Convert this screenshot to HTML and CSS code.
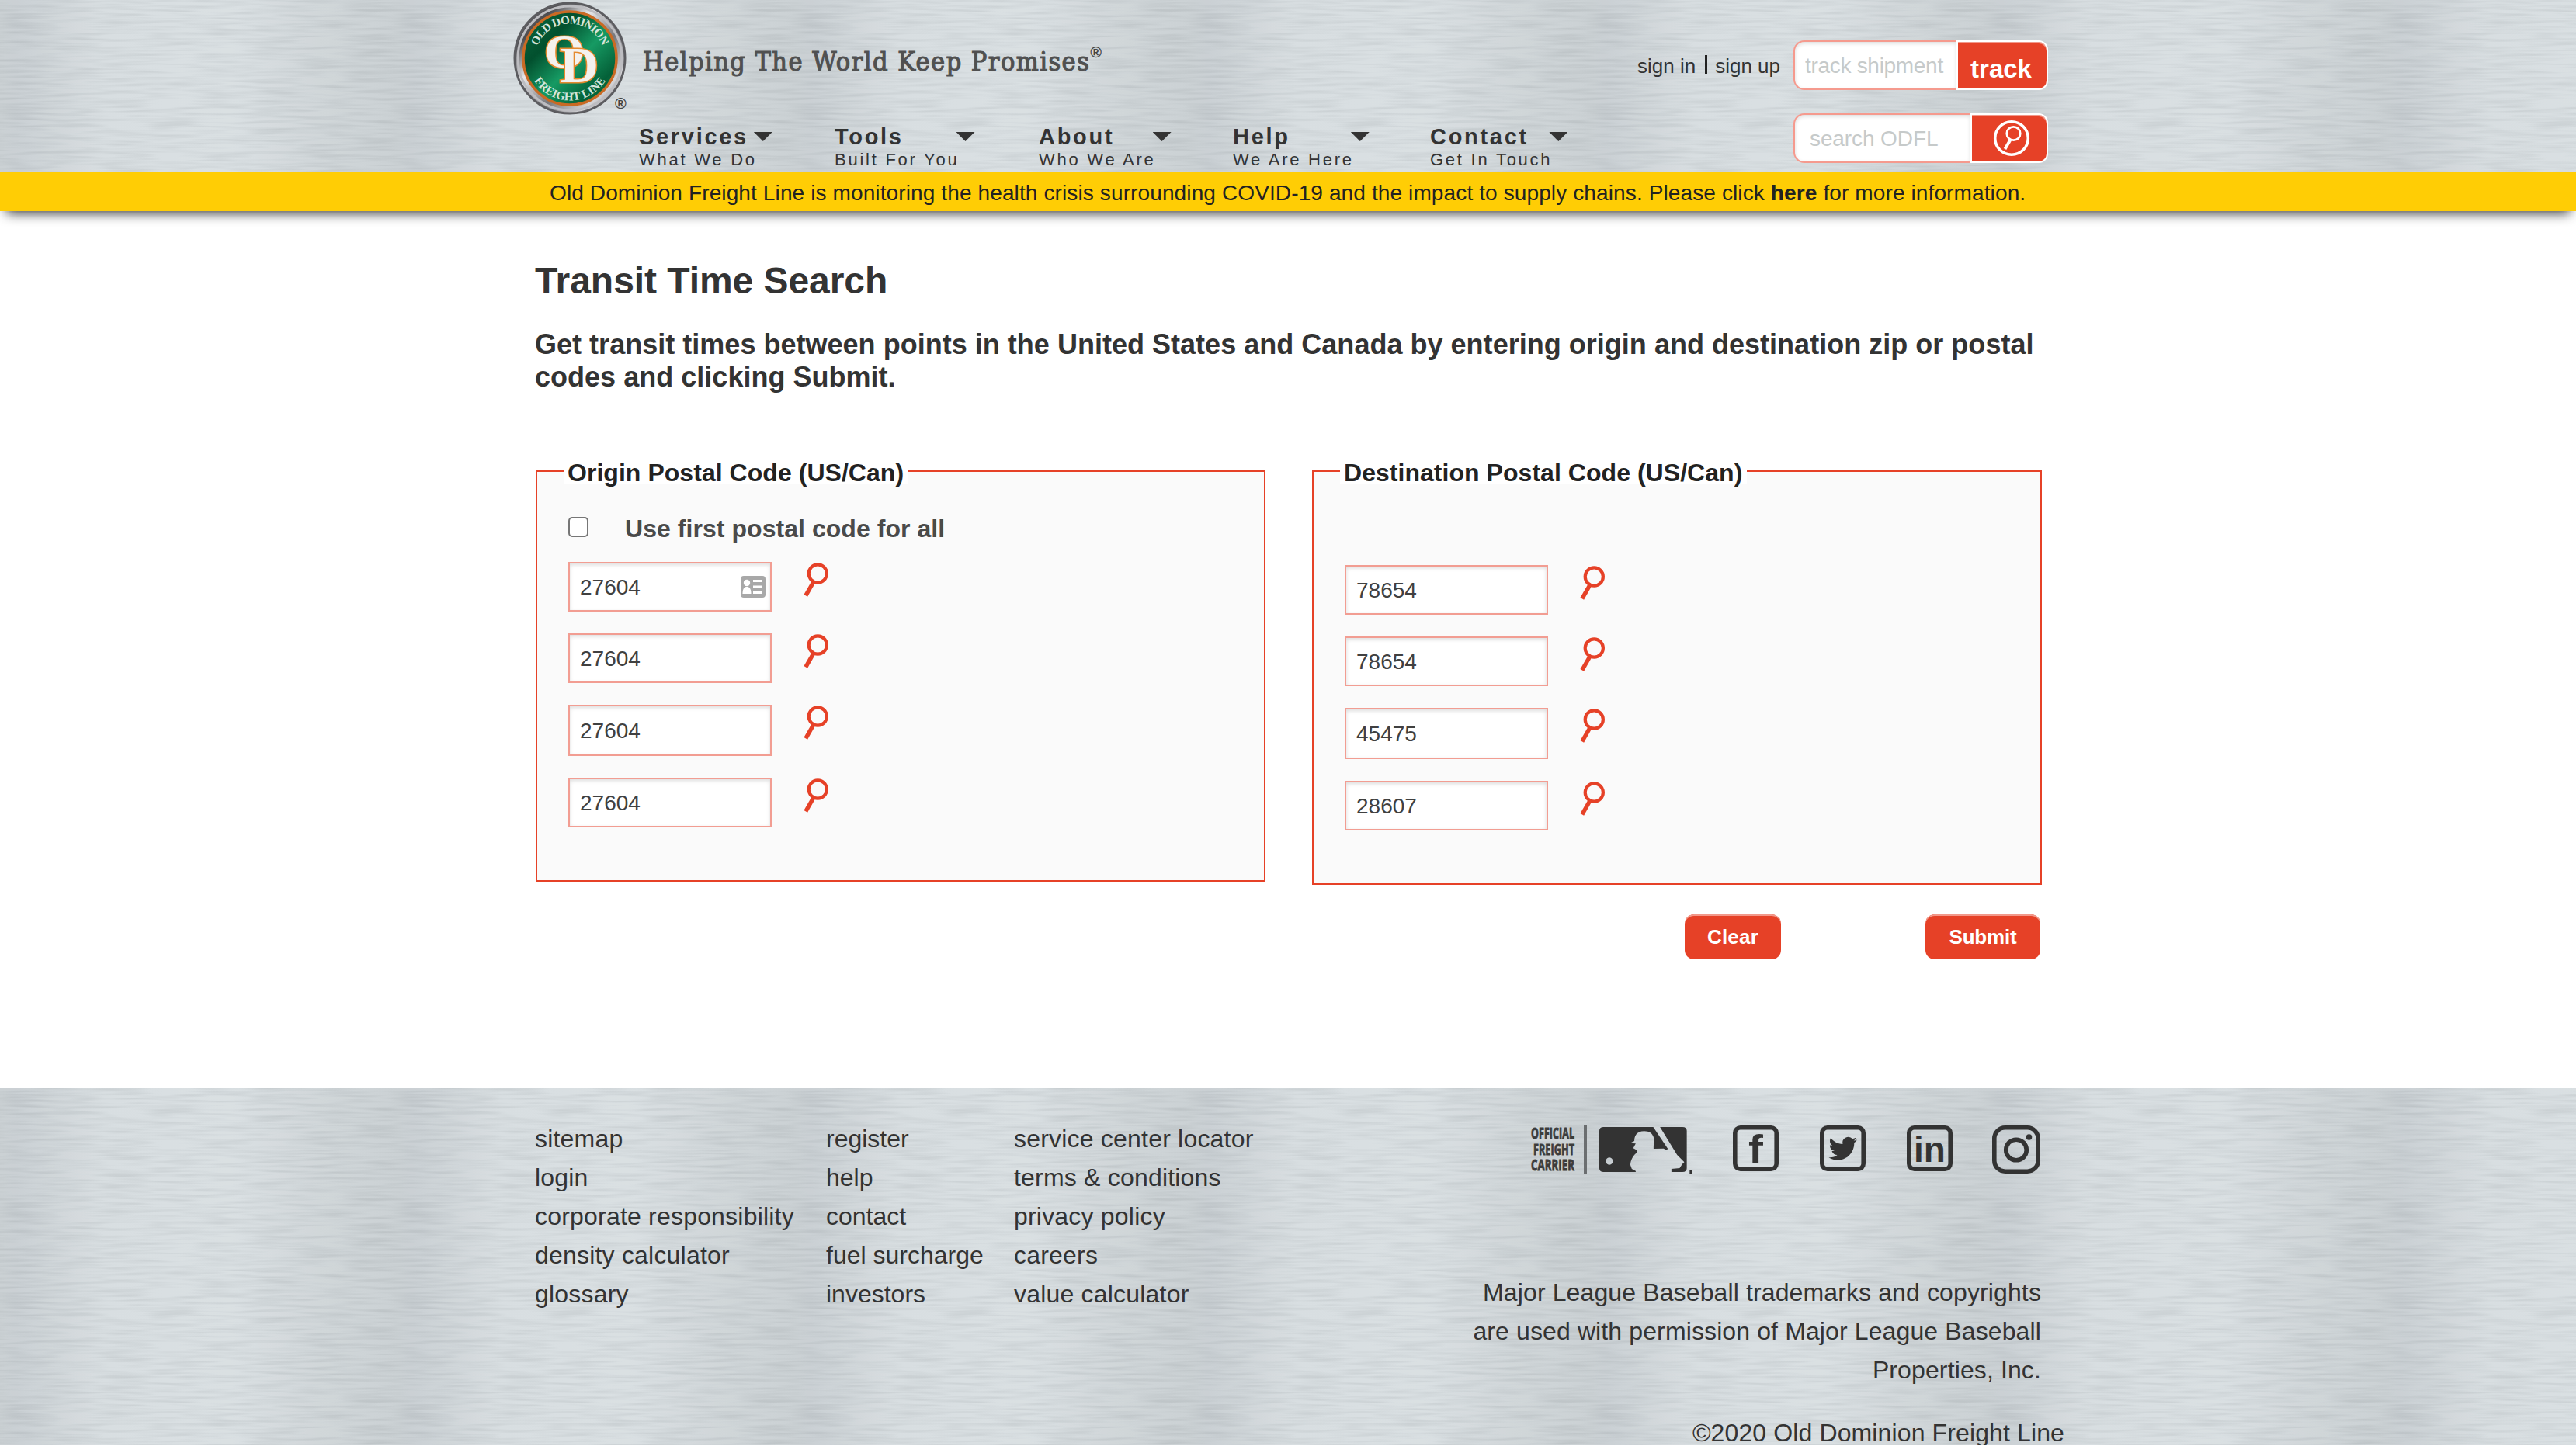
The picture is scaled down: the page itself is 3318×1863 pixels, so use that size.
FILE: index.html
```html
<!DOCTYPE html>
<html lang="en">
<head>
<meta charset="utf-8">
<title>Transit Time Search</title>
<link rel="stylesheet" href="styles.css">
</head>
<body>
<svg class="defs" aria-hidden="true">
  <symbol id="magnifier" viewBox="0 0 32 45">
    <circle cx="18.3" cy="14" r="11.6" fill="none" stroke="#e64127" stroke-width="4.2"/>
    <path d="M13 24.5L2.8 42.3" stroke="#e64127" stroke-width="5.4"/>
  </symbol>
</svg>

<header class="header metal">
  <svg class="logo" viewBox="0 0 146 150">
    <defs>
      <linearGradient id="chrome" x1="0" y1="0" x2="1" y2="1">
        <stop offset="0" stop-color="#8b8b90"/><stop offset=".2" stop-color="#4c4c50"/>
        <stop offset=".38" stop-color="#e8e8ea"/><stop offset=".6" stop-color="#77777b"/>
        <stop offset=".8" stop-color="#d5d5d8"/><stop offset="1" stop-color="#59595d"/>
      </linearGradient>
      <linearGradient id="green" x1="0" y1="0" x2="1" y2="1">
        <stop offset="0" stop-color="#0b6b40"/><stop offset=".3" stop-color="#02502e"/>
        <stop offset=".55" stop-color="#169a63"/><stop offset=".8" stop-color="#046038"/><stop offset="1" stop-color="#0d8a55"/>
      </linearGradient>
      <path id="arcTop" d="M28.500 75A44.500 44.500 0 0 1 117.500 75"/>
      <path id="arcBottom" d="M18.500 75A54.500 54.500 0 0 0 127.500 75"/>
    </defs>
    <circle cx="73" cy="75" r="71" fill="url(#chrome)" stroke="#5c5c60" stroke-width="3"/>
    <circle cx="73" cy="75" r="67" fill="none" stroke="#bdbdc1" stroke-width="3"/>
    <circle cx="73" cy="75" r="60" fill="url(#green)" stroke="#c96a24" stroke-width="3.500"/>
    <g class="logo-ring">
      <text><textPath href="#arcTop" startOffset="50%" text-anchor="middle" textLength="108">OLD DOMINION</textPath></text>
      <text><textPath href="#arcBottom" startOffset="50%" text-anchor="middle" textLength="110">FREIGHT LINE</textPath></text>
    </g>
    <g class="logo-mono">
      <text x="40" y="87" font-size="62" textLength="52" lengthAdjust="spacingAndGlyphs">O</text>
      <text x="60" y="106" font-size="66" textLength="50" lengthAdjust="spacingAndGlyphs">D</text>
    </g>
  </svg>
  <div class="brand">
    <div class="tagline"><span class="reg-logo">®</span>Helping The World Keep Promises<span class="reg">®</span></div>
    <nav class="nav">
      <a class="nav-item"><b>Services</b><i></i><span>What We Do</span></a>
      <a class="nav-item"><b>Tools</b><i></i><span>Built For You</span></a>
      <a class="nav-item"><b>About</b><i></i><span>Who We Are</span></a>
      <a class="nav-item"><b>Help</b><i></i><span>We Are Here</span></a>
      <a class="nav-item"><b>Contact</b><i></i><span>Get In Touch</span></a>
    </nav>
  </div>
  <div class="tools">
    <div class="tool-row">
      <div class="account"><a>sign in</a><i></i><a>sign up</a></div>
      <input class="tool-input tool-track" placeholder="track shipment">
      <button class="tool-btn btn-track">track</button>
    </div>
    <div class="tool-row">
      <input class="tool-input tool-search" placeholder="search ODFL">
      <button class="tool-btn btn-search" aria-label="search">
        <svg width="48" height="48" viewBox="0 0 48 48" fill="none" stroke="#fff">
          <circle cx="24" cy="24" r="21.300" stroke-width="3.600"/>
          <circle cx="26.500" cy="18" r="8.700" stroke-width="2.800"/>
          <path d="M22.500 26L15.500 38" stroke-width="4"/>
        </svg>
      </button>
    </div>
  </div>
</header>

<div class="alert">Old Dominion Freight Line is monitoring the health crisis surrounding COVID-19 and the impact to supply chains. Please click <b>here</b> for more information.</div>

<main class="main">
  <h1>Transit Time Search</h1>
  <p class="intro">Get transit times between points in the United States and Canada by entering origin and destination zip or postal<br>codes and clicking Submit.</p>
  <form>
    <div class="panels">
      <fieldset class="panel panel-origin">
        <legend>Origin Postal Code (US/Can)</legend>
        <label class="same"><input type="checkbox">Use first postal code for all</label>
        <div class="rows">
          <div class="row"><div class="field"><input value="27604">
            <svg class="card" width="32" height="28" viewBox="0 0 32 28"><rect width="32" height="28" rx="4" fill="#a8a8a8"/><circle cx="8" cy="9" r="4.200" fill="#fff"/><path d="M2.500 23c0-6 2-9 5.500-9s5.500 3 5.500 9z" fill="#fff"/><path d="M16 6.500h12M16 14h12M16 21.500h12" stroke="#fff" stroke-width="3"/></svg></div><svg class="mag"><use href="#magnifier"/></svg></div>
          <div class="row"><div class="field"><input value="27604"></div><svg class="mag"><use href="#magnifier"/></svg></div>
          <div class="row row-tall"><div class="field"><input value="27604"></div><svg class="mag"><use href="#magnifier"/></svg></div>
          <div class="row"><div class="field"><input value="27604"></div><svg class="mag"><use href="#magnifier"/></svg></div>
        </div>
      </fieldset>
      <fieldset class="panel panel-dest">
        <legend>Destination Postal Code (US/Can)</legend>
        <div class="rows">
          <div class="row"><div class="field"><input value="78654"></div><svg class="mag"><use href="#magnifier"/></svg></div>
          <div class="row"><div class="field"><input value="78654"></div><svg class="mag"><use href="#magnifier"/></svg></div>
          <div class="row row-tall"><div class="field"><input value="45475"></div><svg class="mag"><use href="#magnifier"/></svg></div>
          <div class="row"><div class="field"><input value="28607"></div><svg class="mag"><use href="#magnifier"/></svg></div>
        </div>
      </fieldset>
    </div>
    <div class="actions">
      <button class="btn btn-clear" type="button">Clear</button>
      <button class="btn btn-submit" type="button">Submit</button>
    </div>
  </form>
</main>

<footer class="footer metal">
  <div class="links">
    <ul><li>sitemap</li><li>login</li><li>corporate responsibility</li><li>density calculator</li><li>glossary</li></ul>
    <ul><li>register</li><li>help</li><li>contact</li><li>fuel surcharge</li><li>investors</li></ul>
    <ul><li>service center locator</li><li>terms &amp; conditions</li><li>privacy policy</li><li>careers</li><li>value calculator</li></ul>
  </div>
  <div class="legal">
    <div class="icons">
      <svg class="carrier" width="72" height="62" viewBox="0 0 72 62">
        <g class="carrier-text"><text x="0" y="17" textLength="56" lengthAdjust="spacingAndGlyphs">OFFICIAL</text><text x="3" y="37.500" textLength="53" lengthAdjust="spacingAndGlyphs">FREIGHT</text><text x="0" y="58" textLength="56" lengthAdjust="spacingAndGlyphs">CARRIER</text></g>
        <path d="M70 0v62" stroke="#6b6e70" stroke-width="4"/>
      </svg>
      <svg class="mlb" width="120" height="62" viewBox="240 90 261 186" preserveAspectRatio="none" fill="#333">
        <path fill-rule="evenodd" d="M252 96H391L432 180L428 185L420 179L392 180V168C396 150 395 112 366 112C343 112 338 134 338 150L326 158L342 160L335 178L346 186L345 195C335 205 327 225 327 243L331 258L342 266V270H252Q240 270 240 256V110Q240 96 252 96ZM268 214a10 14 0 1 0 .1 0z"/>
        <path d="M410 96H473Q485 96 485 110V256Q485 270 473 270H442V258L465 255L472 240L478 232L458 204Z"/>
        <path d="M493 264h8v12h-8z"/>
      </svg>
      <svg class="soc" width="59" height="59" viewBox="0 0 59 59"><rect class="frame" x="2.800" y="2.800" width="53.400" height="53.400" rx="7"/><text x="20" y="48.500" font-size="51" textLength="19" lengthAdjust="spacingAndGlyphs">f</text></svg>
      <svg class="soc" width="59" height="59" viewBox="0 0 59 59"><rect class="frame" x="2.800" y="2.800" width="53.400" height="53.400" rx="7"/><path transform="translate(11.500 11.500) scale(1.520)" d="M23.953 4.570a10 10 0 01-2.825.775 4.958 4.958 0 002.163-2.723c-.951.555-2.005.959-3.127 1.184a4.920 4.920 0 00-8.384 4.482C7.690 8.095 4.067 6.130 1.640 3.162a4.822 4.822 0 00-.666 2.475c0 1.710.870 3.213 2.188 4.096a4.904 4.904 0 01-2.228-.616v.060a4.923 4.923 0 003.946 4.827 4.996 4.996 0 01-2.212.085 4.936 4.936 0 004.604 3.417 9.867 9.867 0 01-6.102 2.105c-.390 0-.779-.023-1.170-.067a13.995 13.995 0 007.557 2.209c9.053 0 13.998-7.496 13.998-13.985 0-.210 0-.420-.015-.630A9.935 9.935 0 0024 4.590z"/></svg>
      <svg class="soc" width="59" height="59" viewBox="0 0 59 59"><rect class="frame" x="2.800" y="2.800" width="53.400" height="53.400" rx="7"/><text x="9" y="47" font-size="46" textLength="41" lengthAdjust="spacingAndGlyphs">in</text></svg>
      <svg class="soc" width="62" height="62" viewBox="0 0 62 62"><rect class="frame" x="2.800" y="2.800" width="56.400" height="56.400" rx="14"/><circle class="frame" cx="31" cy="31.500" r="13.300"/><circle cx="47.500" cy="15" r="3.800"/></svg>
    </div>
    <p>Major League Baseball trademarks and copyrights<br>are used with permission of Major League Baseball<br>Properties, Inc.</p>
    <p class="copy">©2020 Old Dominion Freight Line</p>
  </div>
</footer>
</body>
</html>
```
FILE: styles.css
```css
* { box-sizing: border-box; }
html { height: 100%; overflow: hidden; }
body { margin: 0; background: #fff; color: #333; font-family: "Liberation Sans", Arial, Helvetica, sans-serif; }
.defs { display: none; }
input, button { font-family: inherit; margin: 0; }

/* brushed steel: soft vertical bands under a fine horizontal grain */
.metal {
  background-color: #d0d6d9;
  background-image: url("data:image/svg+xml,%3Csvg xmlns='http://www.w3.org/2000/svg' width='512' height='260'%3E%3ClinearGradient id='g'%3E%3Cstop offset='0' stop-color='%23c7cdd0'/%3E%3Cstop offset='.04' stop-color='%23c6ccd0'/%3E%3Cstop offset='.26' stop-color='%23d5dbde'/%3E%3Cstop offset='.58' stop-color='%23d7dde0'/%3E%3Cstop offset='.8' stop-color='%23cdd3d6'/%3E%3Cstop offset='1' stop-color='%23c7cdd0'/%3E%3C/linearGradient%3E%3Cfilter id='a' x='0' y='0' width='100%25' height='100%25' color-interpolation-filters='sRGB'%3E%3CfeTurbulence type='fractalNoise' baseFrequency='.016 .26' numOctaves='2' seed='4' stitchTiles='stitch'/%3E%3CfeColorMatrix values='1.6 0 0 0 .02 1.6 0 0 0 .05 1.6 0 0 0 .06 0 0 0 0 .08'/%3E%3C/filter%3E%3Crect width='512' height='260' fill='url(%23g)'/%3E%3Crect width='512' height='260' filter='url(%23a)'/%3E%3C/svg%3E");
}
.header.metal { background-position: 0 130px; }

/* header */
.header { display: flex; height: 222px; padding-left: 661px; }
.logo { width: 146px; height: 150px; flex: none; }
.logo-ring { font: bold 15px "Liberation Serif", serif; fill: #d5e5dc; }
.logo-mono { font-family: "Liberation Serif", serif; font-weight: bold; fill: #f4f1ee; stroke: #e58a2f; stroke-width: 3px; paint-order: stroke; }
.brand { width: 1303px; padding: 52px 0 0 16px; }
.tagline { position: relative; height: 108px; padding-left: 5px; font-family: "DejaVu Serif Condensed", "DejaVu Serif", serif; font-stretch: condensed; font-size: 34px; line-height: 54px; letter-spacing: 1.45px; color: #505050; -webkit-text-stroke: 1.1px #505050; white-space: nowrap; }
.reg, .reg-logo { font-family: "Liberation Sans", sans-serif; font-size: 20px; font-weight: bold; line-height: 20px; letter-spacing: 0; color: #444; -webkit-text-stroke: 0; }
.reg { vertical-align: 17px; }
.reg-logo { position: absolute; left: -31px; top: 71px; }
.nav { display: grid; grid-template-columns: 252px 263px 250px 254px 200px; }
.nav-item { display: grid; grid-template-columns: max-content 24px; justify-content: start; }
.nav-item b { grid-column: 1; width: 0; font-size: 29px; line-height: 33px; letter-spacing: 2.7px; white-space: nowrap; }
.nav-item span { grid-column: 1; font-size: 22px; line-height: 26px; letter-spacing: 2.75px; white-space: nowrap; }
.nav-item i { width: 24px; height: 12px; margin: 10px 0 0 -4px; background: #333; clip-path: polygon(0 0, 100% 0, 50% 100%); }
.tools { display: flex; flex-direction: column; align-items: flex-end; gap: 30px; padding-top: 52px; width: 528px; }
.tool-row { display: flex; align-items: flex-start; }
.account { display: flex; width: 201px; padding-top: 15px; font-size: 26px; line-height: 36px; }
.account i { width: 3px; height: 24px; margin: 4px 10px 0 12px; background: #222; }
.tool-input { height: 64px; padding: 1px 0 0 13px; border: 2px solid #f59a8e; border-right: 0; border-radius: 14px 0 0 14px; background: #fff; font-size: 28px; letter-spacing: -.1px; box-shadow: inset 0 2px 5px rgba(0,0,0,.14); }
.tool-input::placeholder { color: #c6caca; opacity: 1; }
.tool-track { width: 210px; letter-spacing: -.3px; }
.tool-search { width: 228px; padding-left: 19px; }
.tool-btn { display: flex; justify-content: center; align-items: center; height: 64px; padding: 0; border: 2px solid #fff; border-radius: 0 12px 12px 0; background: #e64127; color: #fff; box-shadow: inset 0 2px 0 #f2988a; }
.btn-track { width: 118px; font-size: 33px; font-weight: bold; padding: 10px 3px 0 0; }
.btn-search { width: 100px; padding: 0 0 0 6px; }

.alert { position: relative; height: 50px; padding-left: 708px; background: #ffcd05; color: #222; font-size: 28px; line-height: 53px; letter-spacing: .12px; white-space: nowrap; box-shadow: 0 10px 16px -8px rgba(0,0,0,.85); }

/* main */
.main { height: 1130px; padding: 62px 0 0 689px; width: 2630px; }
h1 { margin: 0; font-size: 48px; line-height: 56px; letter-spacing: -.06px; }
.intro { margin: 33px 0 0; font-size: 36px; font-weight: bold; line-height: 42px; letter-spacing: .02px; white-space: nowrap; }
.panels { display: grid; grid-template-columns: 940px 940px; column-gap: 60px; align-items: start; margin: 83px 0 0 1px; }
.panel { margin: 0; padding: 0 34px; border: 2px solid #e64127; background: #fafafa; }
.panel-origin { height: 546px; }
.panel-dest { height: 550px; }
legend { padding: 4px 6px 0 5px; height: 34px; line-height: 30px; font-size: 32px; font-weight: bold; letter-spacing: .04px; color: #222; background: #fff; white-space: nowrap; }
.same { display: flex; align-items: flex-start; gap: 47px; margin: 42px 0 0 6px; height: 58px; font-size: 32px; font-weight: bold; line-height: 30px; letter-spacing: .05px; color: #4a4a4a; }
.same input { appearance: none; width: 26px; height: 26px; border: 2px solid #767676; border-radius: 5px; background: #fff; }
.rows { display: flex; flex-direction: column; gap: 28px; margin-left: 6px; }
.panel-dest .rows { margin-top: 104px; }
.row { display: flex; gap: 41px; height: 64px; }
.row-tall { height: 66px; }
.field { position: relative; width: 262px; height: 100%; }
.field input { width: 100%; height: 100%; padding: 1px 13px 0; border: 2px solid #f29d92; background: #fff; color: #404040; font-size: 28px; box-shadow: inset 0 2px 5px rgba(0,0,0,.14); }
.card { position: absolute; right: 8px; top: 18px; }
.mag { width: 32px; height: 45px; margin-top: 1px; }
.actions { display: flex; justify-content: flex-end; gap: 186px; padding: 38px 2px 0 0; }
.btn { height: 58px; padding: 1px 0 0; border: 0; border-radius: 12px; background: #e64127; color: #fff; font-size: 26px; font-weight: bold; box-shadow: inset 0 2px 0 #f2988a; }
.btn-clear { width: 124px; letter-spacing: .2px; }
.btn-submit { width: 148px; letter-spacing: -.2px; }

/* footer */
.footer { display: flex; height: 460px; padding-left: 689px; font-size: 32px; line-height: 50px; letter-spacing: .2px; overflow: hidden; }
.links { display: grid; grid-template-columns: 375px 242px 394px; padding-top: 40px; height: 300px; }
.links ul { margin: 0; padding: 0; list-style: none; white-space: nowrap; }
.links ul:nth-child(2) { letter-spacing: 0; }
.legal { width: 960px; padding-top: 48px; text-align: right; white-space: nowrap; letter-spacing: .12px; }
.icons { display: flex; margin-left: 272px; height: 190px; }
.icons svg { flex: none; }
.carrier { overflow: visible; }
.carrier-text { font: bold 19.5px "Open Sans", sans-serif; fill: #3c3c3c; stroke: #3c3c3c; stroke-width: .9px; }
.mlb { margin: 0 52px 0 16px; }
.soc { margin-right: 53px; fill: #333; font-family: "Liberation Sans", sans-serif; font-weight: bold; }
.soc:last-child { margin-right: 0; margin-left: -2px; }
.frame { fill: none; stroke: #333; stroke-width: 5.6px; }
.legal p { margin: 0 31px 0 0; }
.legal .copy { margin: 31px 1px 0 0; }
```
